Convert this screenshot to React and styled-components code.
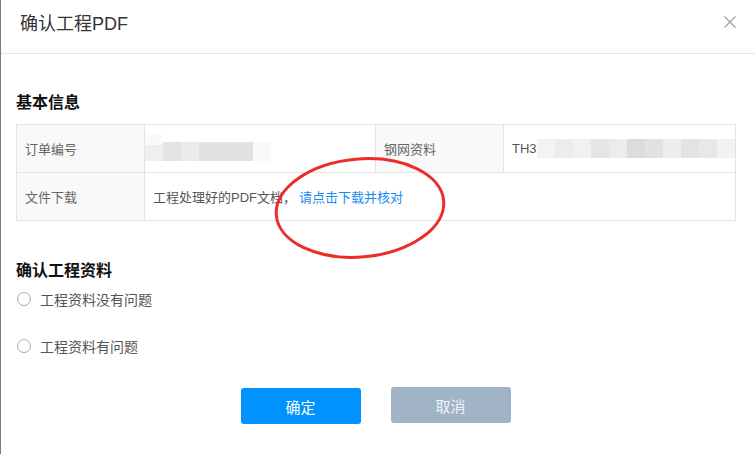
import React from 'react';
import styled, { createGlobalStyle } from 'styled-components';

const GlobalStyle = createGlobalStyle`
  html, body {
    margin: 0;
    padding: 0;
    background: #fff;
  }
  body {
    font-family: "Liberation Sans", "Noto Sans CJK SC", sans-serif;
  }
`;

const Dialog = styled.div`
  position: relative;
  width: 755px;
  height: 454px;
  box-sizing: border-box;
  background: #fff;
  border-left: 1px solid #7a7a7a;
  overflow: hidden;
`;

const Header = styled.div`
  height: 53px;
  display: flex;
  align-items: center;
  justify-content: space-between;
  padding: 0 18px 0 19px;
  border-bottom: 1px solid #e6e6e6;
`;

const Title = styled.div`
  font-size: 18px;
  color: #333;
  margin-top: -9px;
`;

const Close = styled.button`
  border: none;
  background: none;
  padding: 0;
  width: 14px;
  height: 14px;
  margin-top: -9px;
  cursor: pointer;
  display: flex;
`;

const Body = styled.div`
  padding: 0 19px 0 15px;
`;

const SectionTitle = styled.h3`
  margin: ${p => p.top}px 0 0;
  font-size: 16px;
  line-height: 22px;
  font-weight: bold;
  color: #111;
`;

const InfoTable = styled.div`
  margin-top: 10px;
  display: grid;
  grid-template-columns: 128px 231px 128px 1fr;
  border-top: 1px solid #e3e3e3;
  border-left: 1px solid #e3e3e3;
`;

const Cell = styled.div`
  height: 48px;
  box-sizing: border-box;
  display: flex;
  align-items: center;
  padding-left: 8px;
  font-size: 13px;
  color: ${p => (p.label ? '#666' : '#555')};
  background: ${p => (p.label ? '#f9f9f9' : '#fff')};
  border-right: 1px solid #e3e3e3;
  border-bottom: 1px solid #e3e3e3;
  grid-column: ${p => p.span || 'auto'};
  position: relative;
`;

const Link = styled.a`
  color: #1a8cf0;
  text-decoration: none;
  margin-left: 3px;
`;

const Mosaic = styled.div`
  display: flex;
  height: 19px;
  margin-top: 5px;
`;

const Tile = styled.span`
  width: 18px;
  height: 19px;
`;

const Hint = styled.span`
  position: absolute;
  left: 0;
  top: 9px;
  width: 18px;
  height: 11px;
  background: #fafafa;
`;

const RadioGroup = styled.div`
  margin-top: 5px;
  display: flex;
  flex-direction: column;
  gap: 23px;
`;

const RadioRow = styled.label`
  height: 24px;
  display: flex;
  align-items: center;
  gap: 9px;
  font-size: 14px;
  color: #555;
  cursor: pointer;
`;

const RadioDot = styled.span`
  width: 12px;
  height: 12px;
  border: 1px solid #aaa;
  border-radius: 50%;
  margin-left: 1px;
  background: #fff;
`;

const Actions = styled.div`
  margin-top: 29px;
  display: flex;
  justify-content: center;
  gap: 30px;
  padding-right: 1px;
`;

const Button = styled.button`
  width: 120px;
  height: 36px;
  border: none;
  border-radius: 3px;
  font-family: inherit;
  font-size: 15px;
  color: ${p => (p.primary ? '#fff' : '#eef2f6')};
  background: ${p => (p.primary ? '#0092ff' : '#a1b4c6')};
  margin-top: ${p => (p.primary ? 1 : 0)}px;
  cursor: pointer;
`;

const Annotation = styled.svg`
  position: absolute;
  left: 0;
  top: 0;
  pointer-events: none;
`;

const orderTiles = ['#efefef', '#e3e3e3', '#ebebeb', '#e1e2e4', '#e2e2e2', '#e2e2e2', '#f8f9fb'];
const stencilTiles = ['#f3f3f3', '#ececec', '#f1f1f1', '#e5e5e5', '#ececec', '#dcdcdc', '#e2e2e2', '#eeeeee', '#e3e3e3', '#e8e8e8', '#f2f2f2'];

export default function App() {
  return (
    <>
      <GlobalStyle />
      <Dialog>
        <Header>
          <Title>确认工程PDF</Title>
          <Close aria-label="close">
            <svg width="14" height="14" viewBox="0 0 14 14">
              <path d="M1.5 1.5 L12.5 12.5 M12.5 1.5 L1.5 12.5" stroke="#9aa3ad" strokeWidth="1.3" />
            </svg>
          </Close>
        </Header>
        <Body>
          <SectionTitle top={38}>基本信息</SectionTitle>
          <InfoTable>
            <Cell label>订单编号</Cell>
            <Cell style={{ paddingLeft: 0 }}>
              <Hint />
              <Mosaic>
                {orderTiles.map((c, i) => <Tile key={i} style={{ background: c }} />)}
              </Mosaic>
            </Cell>
            <Cell label>钢网资料</Cell>
            <Cell>
              TH3
              <Mosaic style={{ marginTop: 0, marginLeft: 0 }}>
                {stencilTiles.map((c, i) => <Tile key={i} style={{ background: c }} />)}
              </Mosaic>
            </Cell>
            <Cell label>文件下载</Cell>
            <Cell span="2 / 5">
              工程处理好的PDF文档，<Link href="#">请点击下载并核对</Link>
            </Cell>
          </InfoTable>

          <SectionTitle top={39}>确认工程资料</SectionTitle>
          <RadioGroup>
            <RadioRow><RadioDot />工程资料没有问题</RadioRow>
            <RadioRow><RadioDot />工程资料有问题</RadioRow>
          </RadioGroup>

          <Actions>
            <Button primary>确定</Button>
            <Button>取消</Button>
          </Actions>
        </Body>
        <Annotation width="755" height="454">
          <ellipse cx="359" cy="208" rx="84" ry="49" transform="rotate(-5 359 208)" fill="none" stroke="#ee2b2b" strokeWidth="3" />
        </Annotation>
      </Dialog>
    </>
  );
}
